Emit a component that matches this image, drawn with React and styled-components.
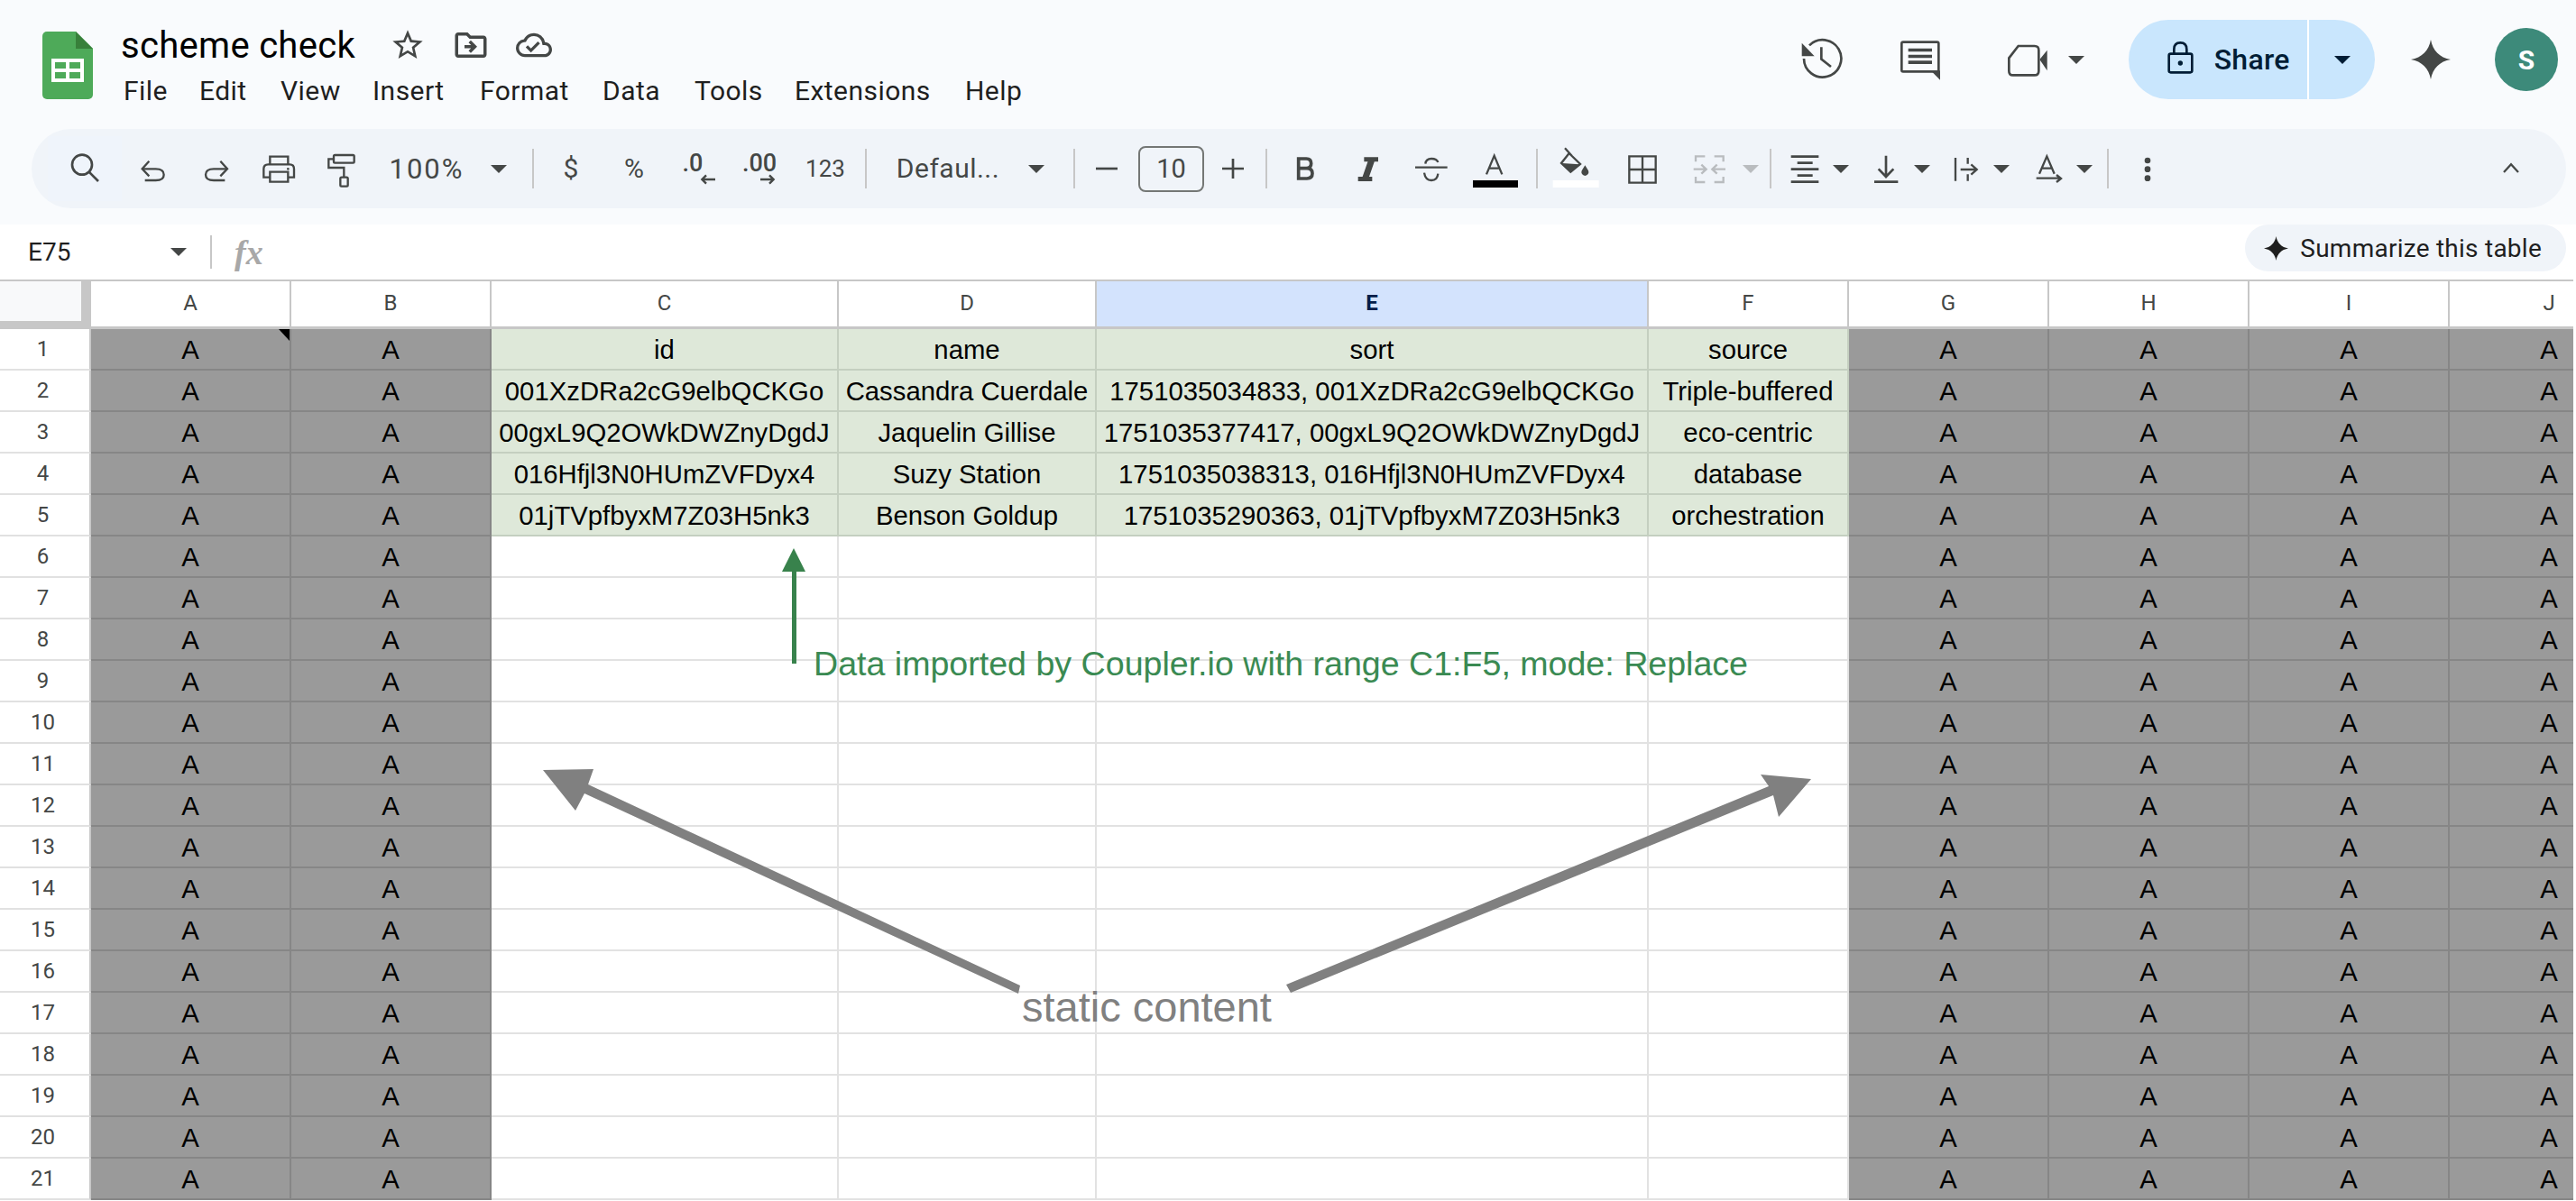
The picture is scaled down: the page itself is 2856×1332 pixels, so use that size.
import React from "react";
import styled, { createGlobalStyle } from "styled-components";
import { MdStarBorder, MdOutlineDriveFileMove, MdOutlineCloudDone } from "react-icons/md";
//
const GlobalStyle = createGlobalStyle`
  html, body {
    margin: 0;
    padding: 0;
    background: #fff;
    overflow: hidden;
  }
  * { box-sizing: border-box; }
`;
const uiFont = `Roboto, "Noto Sans", sans-serif`;
const cellFont = `"Liberation Sans", Arial, sans-serif`;
const ink = "#444746";
//
const Page = styled.div`
  position: relative;
  width: 2856px;
  height: 1332px;
  overflow: hidden;
  font-family: ${uiFont};
`;
const TopBar = styled.div`
  background: #f9fbfd;
  padding-bottom: 18px;
`;
const Header = styled.header`
  display: flex;
  height: 143px;
  padding: 0 20px 0 47px;
`;
const Logo = styled.svg`
  width: 56px;
  height: 75px;
  margin-top: 35px;
  flex: none;
`;
const DocInfo = styled.div`
  margin-left: 31px;
  padding-top: 28px;
`;
const TitleRow = styled.div`
  display: flex;
  align-items: center;
  height: 44px;
`;
const Title = styled.div`
  font-size: 40px;
  letter-spacing: 0.3px;
  width: 262px;
  margin-right: 28px;
  color: #000;
  white-space: nowrap;
`;
const TitleIcon = styled.span`
  display: flex;
  justify-content: center;
  width: 56px;
  margin-right: 14px;
  color: ${ink};
  font-size: ${(p) => p.$size}px;
`;
const Menu = styled.nav`
  display: grid;
  grid-template-columns: 84px 90px 102px 119px 136px 102px 111px 189px auto;
  margin: 6px 0 0 3px;
  height: 44px;
  align-items: center;
  font-size: 30px;
  letter-spacing: 0.45px;
  color: #1f1f1f;
`;
const Actions = styled.div`
  display: flex;
  align-items: center;
  height: 88px;
  margin: 22px 0 0 auto;
`;
const ActionSlot = styled.div`
  display: flex;
  align-items: center;
  justify-content: center;
  width: ${(p) => p.$w}px;
  margin-right: ${(p) => p.$mr || 0}px;
`;
const ShareBtn = styled.div`
  display: flex;
  width: 273px;
  height: 88px;
  margin-right: 40px;
  border-radius: 44px;
  overflow: hidden;
  background: #c9e6fd;
  color: #001d35;
`;
const ShareMain = styled.div`
  display: flex;
  align-items: center;
  width: 200px;
  padding-left: 39px;
  gap: 19px;
  font-size: 32px;
  letter-spacing: 0.3px;
  font-weight: 500;
  border-right: 2px solid #fff;
`;
const ShareCaret = styled.div`
  display: flex;
  align-items: center;
  justify-content: center;
  flex: 1;
`;
const Avatar = styled.div`
  display: flex;
  align-items: center;
  justify-content: center;
  width: 70px;
  height: 70px;
  margin-left: 49px;
  border-radius: 50%;
  background: #3d8a7a;
  color: #fff;
  font-size: 30px;
  font-weight: 700;
`;
const Toolbar = styled.div`
  display: flex;
  align-items: center;
  height: 88px;
  margin: 0 11px 0 35px;
  padding: 0 26px 0 24px;
  border-radius: 44px;
  background: #f0f4f9;
  color: ${ink};
`;
const Tool = styled.div`
  display: flex;
  flex-direction: ${(p) => (p.$stack ? "column" : "row")};
  align-items: center;
  justify-content: center;
  flex: none;
  width: ${(p) => p.$w || 70}px;
  margin-left: ${(p) => p.$ml || 0}px;
  margin-right: ${(p) => p.$mr || 0}px;
  font-size: ${(p) => p.$fs || 28}px;
  letter-spacing: ${(p) => p.$ls || 0}px;
  line-height: 1;
  white-space: nowrap;
  ${(p) =>
    p.$focus &&
    `
    height: 60px;
    background: #eff4fb;
    box-shadow: 0 0 0 6px #eff4fb;
  `}
`;
const DecLabel = styled.span`
  font-weight: 500;
  height: 22px;
  line-height: 22px;
`;
const DecArrow = styled.span`
  display: block;
  margin: 2px 0 0 ${(p) => p.$shift}px;
`;
const Sep = styled.div`
  flex: none;
  width: 2px;
  height: 44px;
  margin: 0 ${(p) => p.$mr || 0}px 0 ${(p) => p.$ml || 0}px;
  background: #c7c7c7;
`;
const SizeBox = styled.div`
  display: flex;
  align-items: center;
  justify-content: center;
  flex: none;
  width: 73px;
  height: 51px;
  border: 2px solid #747775;
  border-radius: 8px;
  font-size: 29px;
  color: ${ink};
`;
const Collapse = styled(Tool)`
  margin-left: auto;
`;
const Caret = styled.i`
  display: block;
  width: 0;
  height: 0;
  border-left: 9px solid transparent;
  border-right: 9px solid transparent;
  border-top: 9px solid ${(p) => p.$color || ink};
`;
const IconSvg = styled.svg`
  display: block;
  flex: none;
  width: ${(p) => p.$w}px;
  height: ${(p) => p.$h}px;
  overflow: visible;
`;
const FormulaBar = styled.div`
  display: flex;
  align-items: center;
  height: 61px;
  padding: 0 11px 0 31px;
  background: #fff;
`;
const NameBox = styled.div`
  width: 158px;
  font-size: 28px;
  color: #1f1f1f;
`;
const FxDivider = styled.div`
  width: 2px;
  height: 37px;
  margin-left: 26px;
  background: #c7c7c7;
`;
const Fx = styled.div`
  margin-left: 25px;
  font: italic bold 38px "Liberation Serif", serif;
  color: #a8a8a8;
`;
const SummarizePill = styled.div`
  display: flex;
  align-items: center;
  gap: 13px;
  align-self: flex-start;
  height: 52px;
  margin-left: auto;
  padding: 0 27px 0 21px;
  border-radius: 26px;
  background: #f0f4f9;
  font-size: 28px;
  letter-spacing: 0.25px;
  color: #1f1f1f;
`;
const Sheet = styled.div`
  display: grid;
  grid-template-columns: 101px 222px 222px 385px 286px 612px 222px 222px 222px 222px 222px;
  grid-template-rows: 53px;
  grid-auto-rows: 46px;
  width: 2853px;
  overflow: hidden;
  border-top: 2px solid #c7c7c7;
`;
const Corner = styled.div`
  background: #f8f9fa;
  border-right: 11px solid #c7c7c7;
  border-bottom: 9px solid #c7c7c7;
`;
const ColHead = styled.div`
  display: flex;
  align-items: center;
  justify-content: center;
  padding-bottom: 2px;
  font-size: 24px;
  background: ${(p) => (p.$active ? "#d3e3fd" : "#fff")};
  color: ${(p) => (p.$active ? "#041e49" : ink)};
  font-weight: ${(p) => (p.$active ? 700 : 400)};
  border-right: 2px solid #c7c7c7;
  border-bottom: 3px solid #c7c7c7;
`;
const RowNum = styled.div`
  display: flex;
  align-items: center;
  justify-content: center;
  padding-right: 4px;
  font-size: 24px;
  color: ${ink};
  border-right: 2px solid #c7c7c7;
  border-bottom: 2px solid #e1e1e1;
`;
const tones = {
  grey: { bg: "#9a9a9a", line: "#868686" },
  green: { bg: "#dee8d9", line: "#c4cfc0" },
  blank: { bg: "#ffffff", line: "#e2e2e2" },
};
const Cell = styled.div`
  position: relative;
  display: flex;
  align-items: center;
  justify-content: center;
  padding-top: 2px;
  font: 29.3px ${cellFont};
  color: #000;
  white-space: nowrap;
  overflow: hidden;
  background: ${(p) => tones[p.$tone].bg};
  border-right: 2px solid ${(p) => tones[p.$tone].line};
  border-bottom: 2px solid ${(p) => tones[p.$tone].line};
  ${(p) =>
    p.$note &&
    `
    &::after {
      content: "";
      position: absolute;
      top: 0;
      right: 0;
      border-top: 13px solid #000;
      border-left: 12px solid transparent;
    }
  `}
`;
const ArrowLayer = styled.svg`
  position: absolute;
  left: 0;
  top: 0;
  width: 2856px;
  height: 1332px;
  pointer-events: none;
`;
const Note = styled.div`
  position: absolute;
  left: ${(p) => p.$x}px;
  top: ${(p) => p.$y}px;
  font: ${(p) => p.$fs}px/1.2 ${cellFont};
  color: ${(p) => p.$color};
  white-space: nowrap;
`;
//
// icons are drawn in 3x pixel units, the viewBox is centered on the slot
const Ico = ({ cx, w = 120, cy = 111, h = 120, sw = 7, color = ink, children }) => (
  <IconSvg
    $w={w / 3}
    $h={h / 3}
    viewBox={`${cx - w / 2} ${cy - h / 2} ${w} ${h}`}
    fill="none"
    stroke={color}
    strokeWidth={sw}
  >
    {children}
  </IconSvg>
);
const Solid = (props) => <path stroke="none" fill={props.color || ink} {...props} />;
const Star4 = ({ size, color }) => (
  <IconSvg $w={size} $h={size} viewBox="0 0 44 44">
    <path fill={color} d="M22 0 C24 12 32 20 44 22 C32 24 24 32 22 44 C20 32 12 24 0 22 C12 20 20 12 22 0 Z" />
  </IconSvg>
);
const SheetsLogo = () => (
  <Logo viewBox="0 0 56 75">
    <path fill="#4eaa59" d="M5 0 H37 L56 19 V70 a5 5 0 0 1 -5 5 H5 a5 5 0 0 1 -5 -5 V5 a5 5 0 0 1 5 -5 Z" />
    <path fill="#38803a" d="M37 0 L56 19 H37 Z" />
    <path
      fill="#fff"
      fillRule="evenodd"
      d="M10 30 H46 V56 H10 Z M14 34 V41 H26 V34 Z M30 34 V41 H42 V34 Z M14 45 V52 H26 V45 Z M30 45 V52 H42 V45 Z"
    />
  </Logo>
);
const SearchIcon = () => (
  <Ico cx={102} sw={8}>
    <circle cx="93" cy="98" r="33" />
    <path d="M116 122 L147 153" />
  </Ico>
);
const UndoIcon = () => (
  <Ico cx={330}>
    <path d="M316 86 L293 112 L316 136" />
    <path d="M295 112 H338 Q365 112 365 131 Q365 150 338 150 H302" />
  </Ico>
);
const RedoIcon = () => (
  <Ico cx={537}>
    <path d="M550 86 L573 112 L550 136" />
    <path d="M571 112 H528 Q501 112 501 131 Q501 150 528 150 H565" />
  </Ico>
);
const PrintIcon = () => (
  <Ico cx={747}>
    <path d="M718 97 V71 H778 V97" />
    <path d="M718 140 H697 V112 Q697 97 712 97 H784 Q798 97 798 112 V140 H778" />
    <path d="M718 122 H778 V155 H718 Z" />
    <circle cx="778" cy="112" r="4" fill={ink} stroke="none" />
  </Ico>
);
const PaintIcon = () => (
  <Ico cx={951}>
    <rect x="927" y="66" width="68" height="26" rx="4" />
    <path d="M927 79 H910 V108 H961 V138" />
    <rect x="949" y="140" width="25" height="30" rx="4" />
  </Ico>
);
const DecDown = () => (
  <Tool $w={60} $stack $fs={27}>
    <DecLabel>.0</DecLabel>
    <DecArrow $shift={34}>
      <Ico cx={60} w={48} cy={24} h={30} sw={7}>
        <path d="M84 24 H40 M54 10 L40 24 L54 38" />
      </Ico>
    </DecArrow>
  </Tool>
);
const DecUp = () => (
  <Tool $w={88} $stack $fs={27}>
    <DecLabel>.00</DecLabel>
    <DecArrow $shift={18}>
      <Ico cx={60} w={48} cy={24} h={30} sw={7}>
        <path d="M36 24 H80 M66 10 L80 24 L66 38" />
      </Ico>
    </DecArrow>
  </Tool>
);
const BoldIcon = () => (
  <Ico cx={81} sw={11}>
    <path d="M62 78 H88 Q104 78 104 94 Q104 110 88 110 H62 Z M62 110 H90 Q108 110 108 127 Q108 144 90 144 H62 Z" />
  </Ico>
);
const ItalicIcon = () => (
  <Ico cx={294}>
    <Solid d="M280 73 H327 V88 H280 Z M260 138 H307 V153 H260 Z M295 80 H317 L294 146 H272 Z" />
  </Ico>
);
const StrikeIcon = () => (
  <Ico cx={504}>
    <path d="M450 107 H557" />
    <path d="M484 95 Q486 78 504 78 Q522 78 526 90 M480 125 Q484 150 504 150 Q524 150 526 128" />
  </Ico>
);
const TextColorIcon = () => (
  <Ico cx={720} w={156}>
    <path d="M690 130 L716 68 L742 130 M698 110 H736" />
    <Solid color="#000" fill="#000" d="M645 150 H795 V174 H645 Z" />
  </Ico>
);
const FillIcon = () => (
  <Ico cx={988} w={156}>
    <path d="M952 43 L975 68 M966 60 L1003 96 L971 122 L940 93 Z" />
    <Solid d="M943 93 L1000 97 L971 122 Z" />
    <Solid d="M1019 100 L1030 118 A12 12 0 1 1 1008 118 Z" />
    <Solid fill="#fff" d="M912 150 H1065 V174 H912 Z" />
  </Ico>
);
const BorderIcon = () => (
  <Ico cx={1209}>
    <path d="M1165 70 H1253 V158 H1165 Z M1209 70 V158 M1165 114 H1253" />
  </Ico>
);
const MergeIcon = () => (
  <Ico cx={1428} color="#b9bcbf">
    <path d="M1383 88 V70 H1414 M1445 70 H1475 V88 M1383 138 V156 H1414 M1445 156 H1475 V138" />
    <path d="M1376 113 H1416 M1402 98 L1418 113 L1402 128 M1482 113 H1440 M1454 98 L1438 113 L1454 128" />
  </Ico>
);
const AlignIcon = () => (
  <Ico cx={158} sw={8}>
    <path d="M112 71 H204 M133 92 H184 M112 113 H204 M133 134 H184 M112 155 H204" />
  </Ico>
);
const ValignIcon = () => (
  <Ico cx={427} sw={8}>
    <path d="M427 68 V135 M402 112 L427 138 L452 112 M388 155 H467" />
  </Ico>
);
const WrapIcon = () => (
  <Ico cx={693}>
    <path d="M660 75 V152 M701 75 V95 M701 130 V152 M677 114 H730 M712 97 L731 114 L712 131" />
  </Ico>
);
const RotateIcon = () => (
  <Ico cx={966}>
    <path d="M936 128 L961 70 L986 128 M944 110 H978 M926 143 H1005 M993 132 L1008 144 L993 156" />
  </Ico>
);
const MoreIcon = () => (
  <Ico cx={1296}>
    <circle cx="1296" cy="84" r="10" fill={ink} stroke="none" />
    <circle cx="1296" cy="113" r="10" fill={ink} stroke="none" />
    <circle cx="1296" cy="143" r="10" fill={ink} stroke="none" />
  </Ico>
);
const ChevronUp = () => (
  <Ico cx={60} cy={60} sw={7}>
    <path d="M36 72 L60 46 L84 72" />
  </Ico>
);
const HistoryIcon = () => (
  <Ico cx={120} w={150} cy={153} h={150} sw={8}>
    <path d="M60 150 A62 62 0 1 0 78 106" />
    <Solid d="M53 98 V142 H95 Z" />
    <path d="M118 112 V152 L150 177" />
  </Ico>
);
const CommentIcon = () => (
  <Ico cx={447} w={150} cy={153} h={150} sw={8}>
    <rect x="385" y="95" width="123" height="98" rx="5" />
    <Solid d="M513 190 V221 L482 190 Z" />
    <Solid d="M407 116 H486 V127 H407 Z M407 137 H486 V148 H407 Z M407 157 H486 V168 H407 Z" />
  </Ico>
);
const MeetIcon = () => (
  <Ico cx={803} w={150} cy={153} h={150} sw={8}>
    <path d="M741 148 L772 108 H826 Q840 108 840 122 V191 Q840 205 826 205 H754 Q741 205 741 191 Z" />
    <Solid d="M843 153 L868 122 V190 Z" />
  </Ico>
);
const LockIcon = () => (
  <Ico cx={1311} cy={153} w={110} h={130} sw={8} color="#001d35">
    <rect x="1273" y="135" width="77" height="62" rx="6" />
    <path d="M1290 135 V120 Q1290 98 1311 98 Q1332 98 1332 120 V135" />
    <circle cx="1311" cy="166" r="8" fill="#001d35" stroke="none" />
  </Ico>
);
//
const colNames = ["A", "B", "C", "D", "E", "F", "G", "H", "I", "J"];
const dataRows = [
  ["id", "name", "sort", "source"],
  ["001XzDRa2cG9elbQCKGo", "Cassandra Cuerdale", "1751035034833, 001XzDRa2cG9elbQCKGo", "Triple-buffered"],
  ["00gxL9Q2OWkDWZnyDgdJ", "Jaquelin Gillise", "1751035377417, 00gxL9Q2OWkDWZnyDgdJ", "eco-centric"],
  ["016Hfjl3N0HUmZVFDyx4", "Suzy Station", "1751035038313, 016Hfjl3N0HUmZVFDyx4", "database"],
  ["01jTVpfbyxM7Z03H5nk3", "Benson Goldup", "1751035290363, 01jTVpfbyxM7Z03H5nk3", "orchestration"],
];
const menuItems = ["File", "Edit", "View", "Insert", "Format", "Data", "Tools", "Extensions", "Help"];
const rowIds = Array.from({ length: 21 }, (_, i) => i + 1);
//
const Row = ({ n }) => {
  const data = dataRows[n - 1];
  return (
    <>
      <RowNum>{n}</RowNum>
      {colNames.map((c, i) => {
        if (i >= 2 && i <= 5) {
          return (
            <Cell key={c} $tone={data ? "green" : "blank"}>
              {data ? data[i - 2] : ""}
            </Cell>
          );
        }
        return (
          <Cell key={c} $tone="grey" $note={n === 1 && c === "A"}>
            A
          </Cell>
        );
      })}
    </>
  );
};
const App = () => (
  <Page>
    <GlobalStyle />
    <TopBar>
      <Header>
        <SheetsLogo />
        <DocInfo>
          <TitleRow>
            <Title>scheme check</Title>
            <TitleIcon $size={40}>
              <MdStarBorder />
            </TitleIcon>
            <TitleIcon $size={42}>
              <MdOutlineDriveFileMove />
            </TitleIcon>
            <TitleIcon $size={40}>
              <MdOutlineCloudDone />
            </TitleIcon>
          </TitleRow>
          <Menu>
            {menuItems.map((m) => (
              <span key={m}>{m}</span>
            ))}
          </Menu>
        </DocInfo>
        <Actions>
          <ActionSlot $w={50} $mr={59}>
            <HistoryIcon />
          </ActionSlot>
          <ActionSlot $w={50} $mr={69}>
            <CommentIcon />
          </ActionSlot>
          <ActionSlot $w={50} $mr={20}>
            <MeetIcon />
          </ActionSlot>
          <ActionSlot $w={18} $mr={49}>
            <Caret />
          </ActionSlot>
          <ShareBtn>
            <ShareMain>
              <LockIcon />
              Share
            </ShareMain>
            <ShareCaret>
              <Caret $color="#001d35" />
            </ShareCaret>
          </ShareBtn>
          <Star4 size={44} color={ink} />
          <Avatar>S</Avatar>
        </Actions>
      </Header>
      <Toolbar>
        <Tool $focus $mr={6}>
          <SearchIcon />
        </Tool>
        <Tool>
          <UndoIcon />
        </Tool>
        <Tool $w={69}>
          <RedoIcon />
        </Tool>
        <Tool>
          <PrintIcon />
        </Tool>
        <Tool $w={67}>
          <PaintIcon />
        </Tool>
        <Tool $w={124} $fs={31} $ls={2}>
          100%
        </Tool>
        <Tool $w={36}>
          <Caret />
        </Tool>
        <Sep $ml={19} $mr={6} />
        <Tool $fs={30}>$</Tool>
        <Tool $fs={30}>%</Tool>
        <DecDown />
        <DecUp />
        <Tool $w={58} $fs={26}>
          123
        </Tool>
        <Sep $ml={15} $mr={12} />
        <Tool $w={156} $fs={30} $ls={0.5}>
          Defaul...
        </Tool>
        <Tool $w={40}>
          <Caret />
        </Tool>
        <Sep $ml={21} />
        <Tool>
          <Ico cx={60} cy={60} sw={8}>
            <path d="M24 60 H96" />
          </Ico>
        </Tool>
        <SizeBox>10</SizeBox>
        <Tool $w={64}>
          <Ico cx={60} cy={60} sw={8}>
            <path d="M24 60 H96 M60 27 V93" />
          </Ico>
        </Tool>
        <Sep $ml={4} $mr={6} />
        <Tool>
          <BoldIcon />
        </Tool>
        <Tool $w={72}>
          <ItalicIcon />
        </Tool>
        <Tool $w={68}>
          <StrikeIcon />
        </Tool>
        <Tool $w={74}>
          <TextColorIcon />
        </Tool>
        <Sep $ml={8} $mr={7} />
        <Tool>
          <FillIcon />
        </Tool>
        <Tool $w={78}>
          <BorderIcon />
        </Tool>
        <Tool>
          <MergeIcon />
        </Tool>
        <Tool $w={22}>
          <Caret $color="#b9bcbf" />
        </Tool>
        <Sep $ml={10} $mr={7} />
        <Tool $w={60}>
          <AlignIcon />
        </Tool>
        <Tool $w={20}>
          <Caret />
        </Tool>
        <Tool $w={60} $ml={10}>
          <ValignIcon />
        </Tool>
        <Tool $w={20}>
          <Caret />
        </Tool>
        <Tool $w={60} $ml={8}>
          <WrapIcon />
        </Tool>
        <Tool $w={20}>
          <Caret />
        </Tool>
        <Tool $w={60} $ml={12}>
          <RotateIcon />
        </Tool>
        <Tool $w={20}>
          <Caret />
        </Tool>
        <Sep $ml={15} $mr={8} />
        <Tool>
          <MoreIcon />
        </Tool>
        <Collapse>
          <ChevronUp />
        </Collapse>
      </Toolbar>
    </TopBar>
    <FormulaBar>
      <NameBox>E75</NameBox>
      <Caret />
      <FxDivider />
      <Fx>fx</Fx>
      <SummarizePill>
        <Star4 size={27} color="#1f1f1f" />
        Summarize this table
      </SummarizePill>
    </FormulaBar>
    <Sheet>
      <Corner />
      {colNames.map((c) => (
        <ColHead key={c} $active={c === "E"}>
          {c}
        </ColHead>
      ))}
      {rowIds.map((n) => (
        <Row key={n} n={n} />
      ))}
    </Sheet>
    <ArrowLayer viewBox="0 0 2856 1332">
      <path fill="#38824c" d="M880 608 L893 634 H883 V736 H878 V634 H867 Z" />
      <path fill="#808080" d="M1131 1093 L1129 1102 L648 880 L638 899 L602 854 L658 853 L652 870 Z" />
      <path fill="#808080" d="M1426 1092 L1431 1101 L1966 882 L1972 906 L2008 864 L1952 859 L1961 872 Z" />
    </ArrowLayer>
    <Note $x={902} $y={714} $fs={37.6} $color="#3a8a52">
      Data imported by Coupler.io with range C1:F5, mode: Replace
    </Note>
    <Note $x={1133} $y={1089} $fs={47} $color="#808080">
      static content
    </Note>
  </Page>
);
export default App;
